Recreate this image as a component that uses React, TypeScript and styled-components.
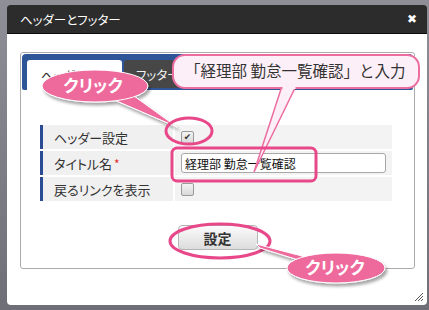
import styled, { createGlobalStyle } from 'styled-components'

const Global = createGlobalStyle`
  html, body {
    margin: 0;
    padding: 0;
    background: #7c7c85;
    font-family: "Noto Sans CJK JP", "Liberation Sans", sans-serif;
  }
  #root {
    width: 429px;
    height: 310px;
    position: relative;
    overflow: hidden;
  }
`

const Page = styled.div`
  width: 429px;
  height: 310px;
  padding: 5px 2px 0 7px;
  box-sizing: border-box;
  background: linear-gradient(#8f8f97, #6e6e77);
`

const Dialog = styled.div`
  width: 420px;
  height: 300px;
  background: #fff;
  border-radius: 3px 3px 4px 4px;
  display: flex;
  flex-direction: column;
  position: relative;
`

const TitleBar = styled.div`
  height: 28px;
  background: #2c2c2c;
  border-bottom: 1px solid #0c0c0c;
  border-radius: 3px 3px 0 0;
  display: flex;
  align-items: center;
  justify-content: space-between;
  padding: 0 10px 0 13px;
  color: #fff;
  font-size: 12.5px;
  font-feature-settings: "palt";
`

const Close = styled.span`
  font-size: 12px;
  font-weight: 700;
  font-family: "DejaVu Sans", sans-serif;
`

const Body = styled.div`
  padding: 18px 12px 0 13px;
`

const Panel = styled.div`
  width: 395px;
  height: 217px;
  box-sizing: border-box;
  border: 1px solid #ababab;
  border-radius: 3px;
  padding: 1px;
  display: flex;
  flex-direction: column;
`

const TabStrip = styled.div`
  height: 36px;
  box-sizing: border-box;
  background: #2e5597;
  border-radius: 4px 4px 2px 2px;
  padding: 6px 0 0 5px;
  display: flex;
  align-items: flex-end;
  gap: 2px;
`

const Tab = styled.div<{ $active?: boolean }>`
  height: ${p => (p.$active ? '30px' : '28px')};
  margin-bottom: ${p => (p.$active ? '0' : '2px')};
  width: ${p => (p.$active ? '95px' : '80px')};
  box-sizing: border-box;
  background: ${p => (p.$active ? '#fff' : '#474747')};
  color: ${p => (p.$active ? '#222' : '#f2f2f2')};
  border-radius: 3px 3px 0 0;
  font-size: 12.5px;
  font-feature-settings: "palt";
  display: flex;
  align-items: center;
  padding-left: ${p => (p.$active ? '14px' : '12px')};
`

const Rows = styled.div`
  margin: 35px 21px 0 18px;
  display: flex;
  flex-direction: column;
  gap: 2px;
`

const Row = styled.div`
  display: grid;
  grid-template-columns: 133px 1fr;
  gap: 2px;
  height: 24px;
`

const Label = styled.div`
  background: #f0f0f0;
  border-left: 3px solid #2c4b95;
  padding-left: 11px;
  display: flex;
  align-items: center;
  font-size: 13px;
  font-feature-settings: "palt";
  color: #333;
`

const Required = styled.span`
  color: #e0302f;
  margin-left: 2px;
  font-size: 12px;
`

const Value = styled.div`
  background: #f3f3f3;
  padding-left: 6px;
  display: flex;
  align-items: center;
`

const Check = styled.span<{ $checked?: boolean }>`
  width: 11px;
  height: 11px;
  border: 1px solid #9a9a9a;
  border-radius: 2px;
  background: linear-gradient(#f4f4f4, #d8d8d8);
  display: flex;
  align-items: center;
  justify-content: center;
  font-size: 9px;
  line-height: 1;
  color: #333;
  font-family: "DejaVu Sans", sans-serif;
`

const TextInput = styled.div`
  width: 205px;
  height: 20px;
  box-sizing: border-box;
  border: 1px solid #a8a8a8;
  border-radius: 3px;
  background: #fff;
  font-size: 12px;
  color: #111;
  display: flex;
  align-items: center;
  padding-left: 3px;
`

const ButtonRow = styled.div`
  display: flex;
  justify-content: center;
  margin-top: 24px;
`

const Button = styled.button`
  width: 80px;
  height: 25px;
  border: 1px solid #b5b5b5;
  border-radius: 4px;
  background: linear-gradient(#fbfbfb, #dcdcdc);
  font-family: inherit;
  font-size: 14px;
  font-weight: 700;
  color: #333;
  padding: 0;
`

const Grip = styled.svg`
  position: absolute;
  right: 4px;
  bottom: 4px;
`

const Overlay = styled.svg`
  position: absolute;
  left: 0;
  top: 0;
  font-family: "Noto Sans CJK JP", sans-serif;
`

const PINK = '#ee6a9c'
const RING = '#e8488a'

export default function App() {
  return (
    <>
      <Global />
      <Page>
        <Dialog>
          <TitleBar>
            <span>ヘッダーとフッター</span>
            <Close>✖</Close>
          </TitleBar>
          <Body>
            <Panel>
              <TabStrip>
                <Tab $active>ヘッダー</Tab>
                <Tab>フッター</Tab>
              </TabStrip>
              <Rows>
                <Row>
                  <Label>ヘッダー設定</Label>
                  <Value>
                    <Check $checked>✔</Check>
                  </Value>
                </Row>
                <Row>
                  <Label>
                    タイトル名<Required>*</Required>
                  </Label>
                  <Value>
                    <TextInput>経理部 勤怠一覧確認</TextInput>
                  </Value>
                </Row>
                <Row>
                  <Label>戻るリンクを表示</Label>
                  <Value>
                    <Check />
                  </Value>
                </Row>
              </Rows>
              <ButtonRow>
                <Button>設定</Button>
              </ButtonRow>
            </Panel>
          </Body>
          <Grip width="9" height="9" viewBox="0 0 9 9">
            <path d="M1 9 L9 1 M4 9 L9 4 M7 9 L9 7" stroke="#555" strokeWidth="1" />
          </Grip>
        </Dialog>
      </Page>

      <Overlay width="429" height="310" viewBox="0 0 429 310">
        <defs>
          <filter id="sh" x="-20%" y="-30%" width="150%" height="180%">
            <feDropShadow dx="2" dy="3" stdDeviation="1.5" floodColor="#000" floodOpacity="0.35" />
          </filter>
        </defs>

        {/* callout: click the header checkbox */}
        <g filter="url(#sh)">
          <path d="M112 99 L134 96 L177 127 Z" fill={PINK} stroke="#fff" strokeWidth="1" />
          <ellipse cx="95" cy="86" rx="53" ry="16" fill={PINK} stroke="#fff" strokeWidth="1" />
        </g>
        <text x="93" y="92" fontSize="17" fontWeight="700" fill="#fff" textAnchor="middle" style={{ fontFeatureSettings: '"palt"' }}>
          クリック
        </text>
        <ellipse cx="189" cy="131" rx="23" ry="13" fill="none" stroke={RING} strokeWidth="3" />

        {/* callout: type the title */}
        <path d="M282 86 L296 86 L254 172 Z" fill="#fdeff8" stroke="#ec6ea0" strokeWidth="1.5" />
        <rect x="173" y="55" width="246" height="33" rx="12" fill="#fdeff8" stroke="#ec6ea0" strokeWidth="2" />
        <rect x="282.5" y="85" width="13" height="4" fill="#fdeff8" />
        <text x="185" y="77" fontSize="15.5" fill="#333">「経理部 勤怠一覧確認」と入力</text>
        <rect x="172" y="148" width="144" height="33" rx="5" fill="none" stroke={RING} strokeWidth="3" />

        {/* callout: click the button */}
        <ellipse cx="220" cy="241" rx="50" ry="17" fill="none" stroke={RING} strokeWidth="3" />
        <g filter="url(#sh)">
          <path d="M256 244 L260 248 L305 262 L302 256 Z" fill={PINK} stroke="#fff" strokeWidth="1" />
          <ellipse cx="336" cy="268" rx="49" ry="15" fill={PINK} stroke="#fff" strokeWidth="1" />
        </g>
        <text x="335" y="274" fontSize="17" fontWeight="700" fill="#fff" textAnchor="middle" style={{ fontFeatureSettings: '"palt"' }}>
          クリック
        </text>
      </Overlay>
    </>
  )
}
